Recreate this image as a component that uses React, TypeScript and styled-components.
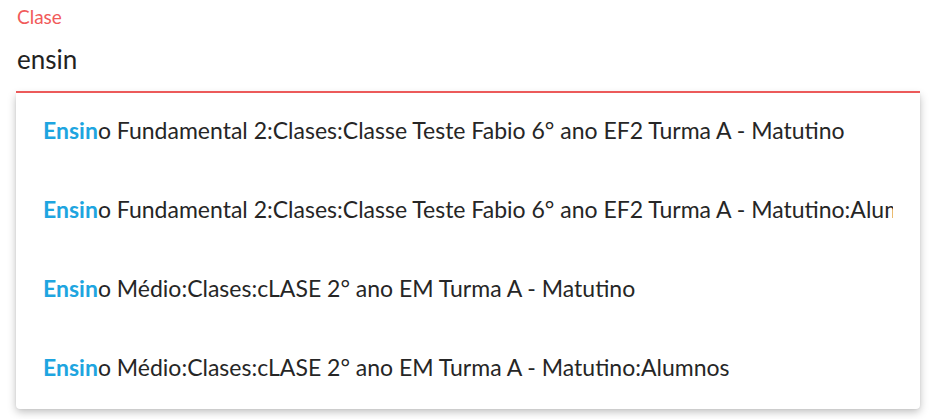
import styled, { createGlobalStyle } from "styled-components";

const GlobalStyle = createGlobalStyle`
  html, body {
    margin: 0;
    padding: 0;
    background: #fff;
    font-family: Lato, "Open Sans", sans-serif;
  }
`;

const Wrap = styled.div`
  width: 940px;
  height: 419px;
  padding: 0 20px 0 16px;
  box-sizing: border-box;
  overflow: hidden;
`;

const Field = styled.div`
  display: flex;
  flex-direction: column;
`;

const Label = styled.label`
  font-size: 19px;
  color: #f15a5a;
  padding: 6px 0 0 1px;
  line-height: 22px;
`;

const Input = styled.input`
  border: none;
  outline: none;
  background: transparent;
  font-family: Lato, sans-serif;
  font-size: 26px;
  color: #222;
  padding: 15px 0 16px 1px;
  line-height: 32px;
  border-bottom: 2px solid #ec5a5a;
`;

const Menu = styled.ul`
  list-style: none;
  margin: 0;
  padding: 0;
  background: #fff;
  border-radius: 0 0 4px 4px;
  box-shadow: 0 3px 8px rgba(0, 0, 0, 0.25), 0 0 2px rgba(0, 0, 0, 0.08);
`;

const Option = styled.li`
  height: 79px;
  box-sizing: border-box;
  display: flex;
  align-items: center;
  padding: 0 27px 5px;
  font-size: 23px;
  color: #262626;
  white-space: nowrap;
`;

const OptionText = styled.span`
  min-width: 0;
  overflow: hidden;
`;

const Match = styled.span`
  color: #1ea5e0;
  font-weight: 700;
`;

const options = [
  "Ensino Fundamental 2:Clases:Classe Teste Fabio 6° ano EF2 Turma A - Matutino",
  "Ensino Fundamental 2:Clases:Classe Teste Fabio 6° ano EF2 Turma A - Matutino:Alumnos",
  "Ensino Médio:Clases:cLASE 2° ano EM Turma A - Matutino",
  "Ensino Médio:Clases:cLASE 2° ano EM Turma A - Matutino:Alumnos",
];

export default function App() {
  const query = "ensin";
  return (
    <Wrap>
      <GlobalStyle />
      <Field>
        <Label htmlFor="clase">Clase</Label>
        <Input id="clase" value={query} readOnly />
      </Field>
      <Menu>
        {options.map((o) => (
          <Option key={o}>
            <OptionText>
              <Match>{o.slice(0, query.length)}</Match>
              {o.slice(query.length)}
            </OptionText>
          </Option>
        ))}
      </Menu>
    </Wrap>
  );
}
